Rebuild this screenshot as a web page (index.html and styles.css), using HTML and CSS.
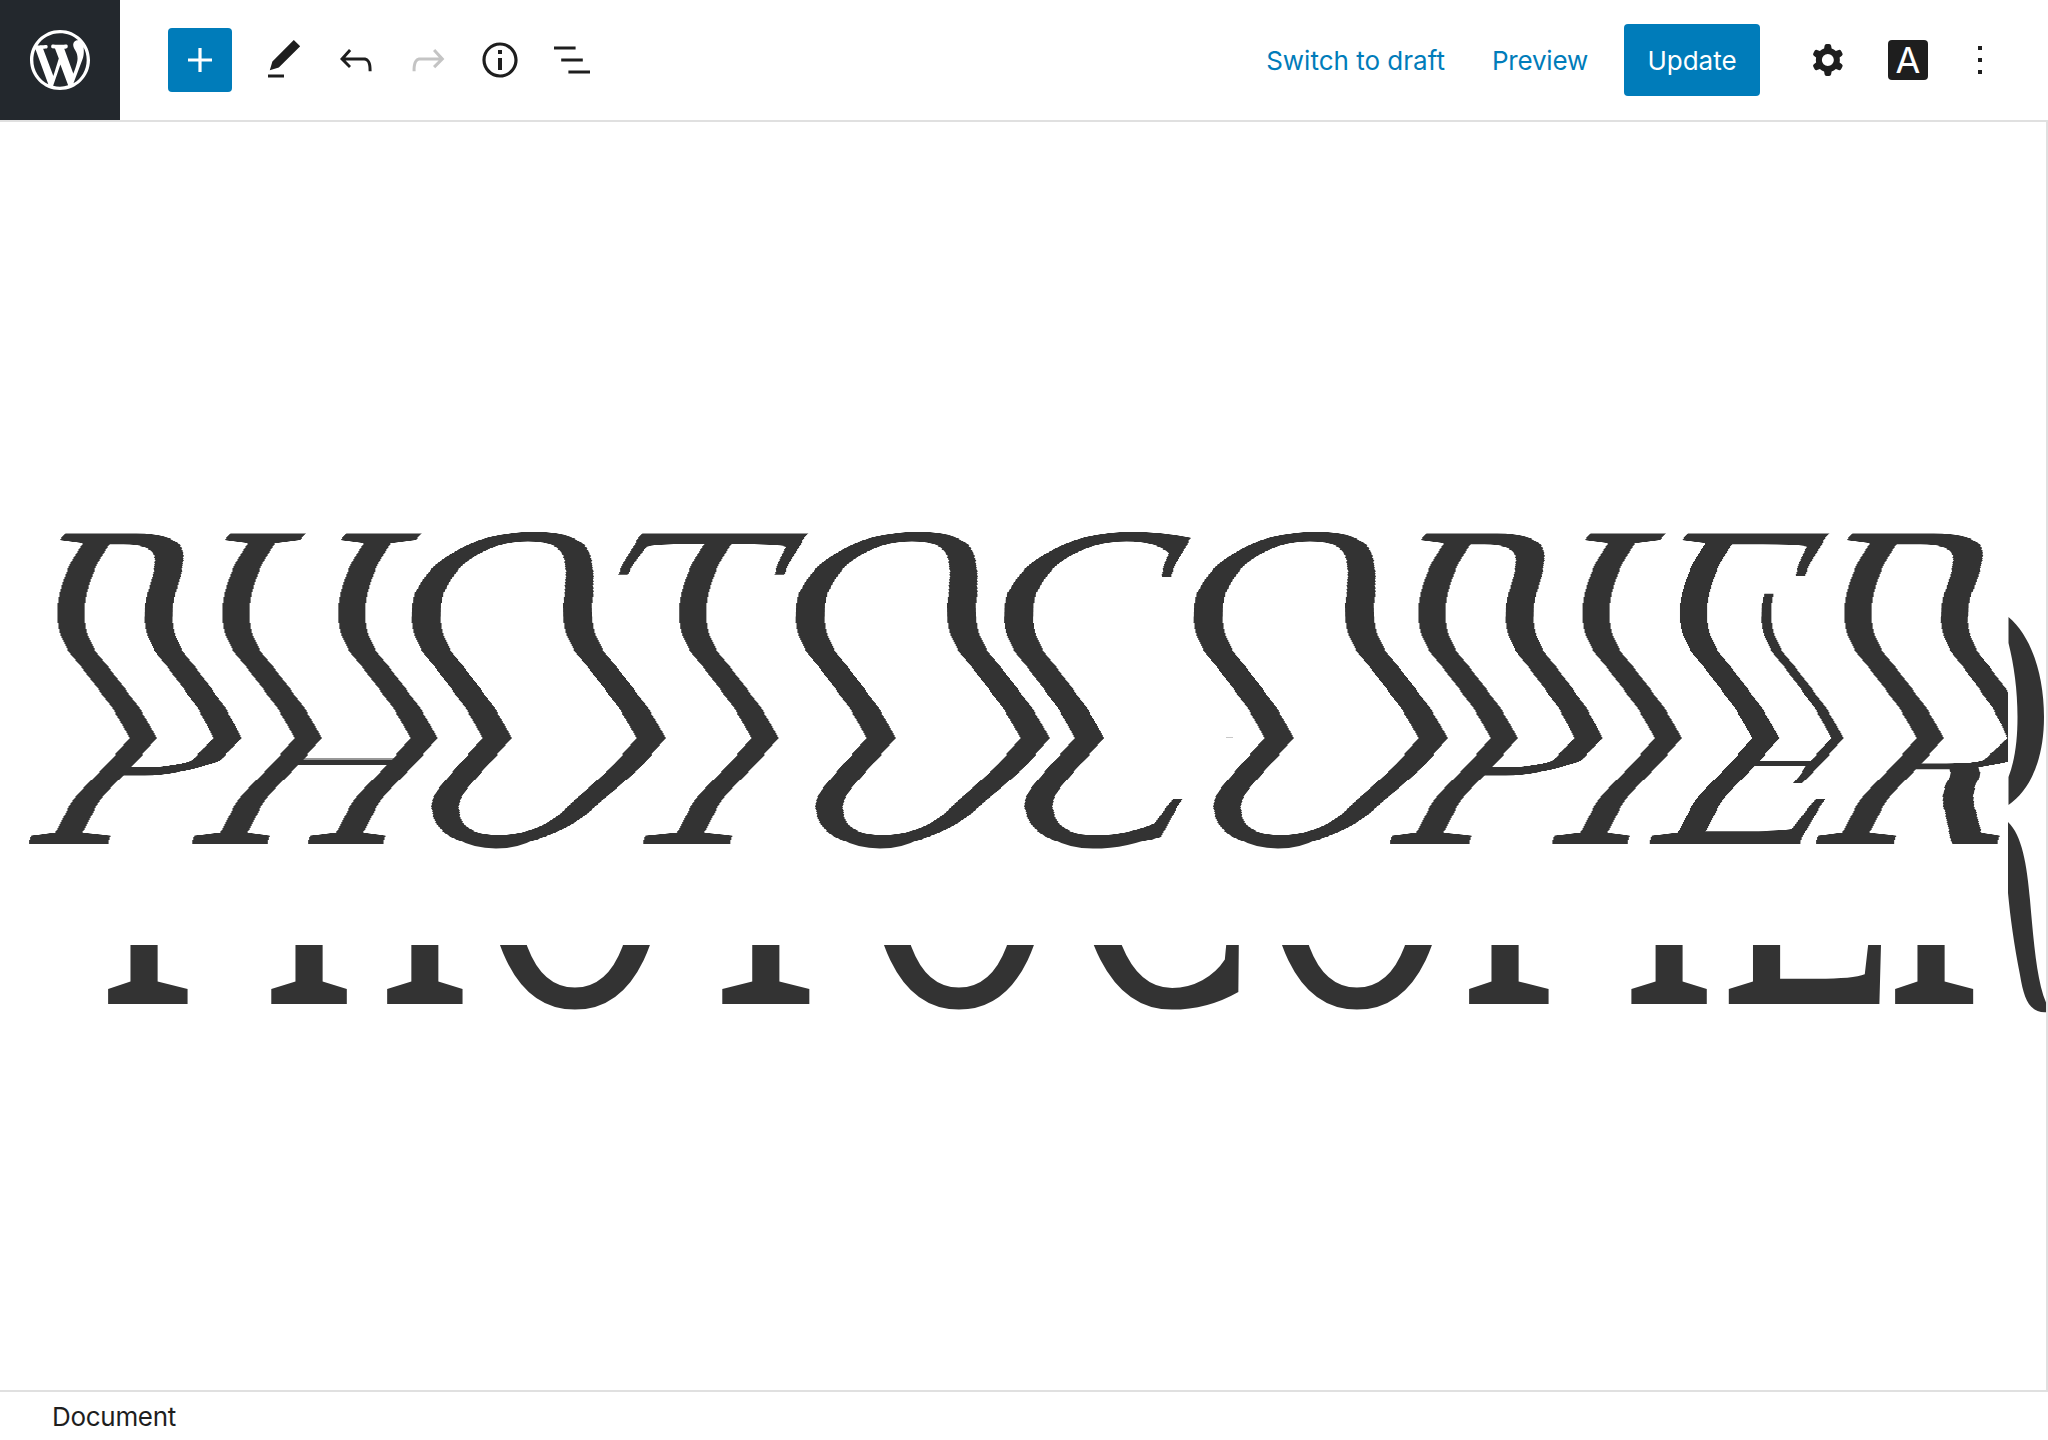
FILE: index.html
```html
<!DOCTYPE html>
<html lang="en">
<head>
<meta charset="utf-8">
<title>Photocopier</title>
<link rel="stylesheet" href="styles.css">
</head>
<body>
<div class="editor">
  <header class="topbar">
    <a class="logo">
      <svg class="logo-mark" viewBox="0 0 20 20"><path d="M20 10c0-5.51-4.49-10-10-10C4.48 0 0 4.49 0 10c0 5.52 4.48 10 10 10 5.51 0 10-4.48 10-10zM7.78 15.37L4.37 6.22c.55-.02 1.17-.08 1.17-.08.5-.06.44-1.13-.06-1.11 0 0-1.45.11-2.37.11-.18 0-.37 0-.58-.01C4.12 2.69 6.87 1.11 10 1.11c2.33 0 4.45.87 6.05 2.34-.68-.11-1.65.39-1.65 1.58 0 .74.45 1.36.9 2.1.35.61.55 1.36.55 2.46 0 1.49-1.4 5-1.4 5l-3.03-8.37c.54-.02.82-.17.82-.17.5-.05.44-1.25-.06-1.22 0 0-1.44.12-2.38.12-.87 0-2.33-.12-2.33-.12-.5-.03-.56 1.2-.06 1.22l.92.08 1.26 3.41zM17.41 10c.24-.64.74-1.87.43-4.25.7 1.29 1.05 2.71 1.05 4.25 0 3.29-1.73 6.24-4.4 7.78.97-2.59 1.94-5.2 2.92-7.78zM6.1 18.09C3.12 16.65 1.11 13.53 1.11 10c0-1.3.23-2.48.72-3.59C3.25 10.3 4.67 14.2 6.1 18.09zm4.03-6.63l2.58 6.98c-.86.29-1.76.45-2.71.45-.79 0-1.57-.11-2.29-.33.81-2.38 1.62-4.74 2.42-7.1z"/></svg>
    </a>
    <div class="tools">
      <button class="inserter"><svg class="icon-plus" viewBox="0 0 24 24"><path d="M18 11.2h-5.2V6h-1.6v5.2H6v1.6h5.2V18h1.6v-5.2H18z"/></svg></button>
      <div class="tool-icons">
        <svg class="icon" viewBox="0 0 24 24"><path d="M20.1 5.1L16.9 2 6.2 12.7l-1.3 4.4 4.5-1.3L20.1 5.1zM4 20.8h8v-1.5H4v1.5z"/></svg>
        <svg class="icon" viewBox="0 0 24 24"><path d="M18.3 11.7c-.6-.6-1.4-.9-2.3-.9H6.7l2.9-3.3-1.1-1-4.5 5L8.5 16l1-1-2.7-2.7H16c.5 0 .9.2 1.3.5 1 1 1 3.4 1 4.5v.3h1.5v-.2c0-1.5 0-4.3-1.5-5.7z"/></svg>
        <svg class="icon icon-off" viewBox="0 0 24 24"><path d="M15.6 6.5l-1.1 1 2.9 3.3H8c-.9 0-1.7.3-2.3.9-1.4 1.5-1.4 4.2-1.4 5.7v.2h1.5v-.3c0-1.1 0-3.5 1-4.5.3-.3.7-.5 1.3-.5h9.2L14.5 15l1.1 1.1 4.6-4.6-4.6-5z"/></svg>
        <svg class="icon" viewBox="0 0 24 24"><path d="M12 3.2c-4.8 0-8.8 3.9-8.8 8.8 0 4.8 3.9 8.8 8.8 8.8 4.8 0 8.8-3.9 8.8-8.8 0-4.8-4-8.8-8.8-8.8zm0 16c-4 0-7.2-3.3-7.2-7.2C4.8 8 8 4.8 12 4.8s7.2 3.3 7.2 7.2c0 4-3.2 7.2-7.2 7.2zM11 17h2v-6h-2v6zm0-8h2V7h-2v2z"/></svg>
        <svg class="icon" viewBox="0 0 24 24"><path d="M13.8 5.2H3v1.5h10.8V5.2zm-3.6 12v1.5H21v-1.5H10.2zm-3.6-6v1.5h10.8v-1.5H6.6z"/></svg>
      </div>
    </div>
    <div class="actions">
      <a class="link link-draft">Switch to draft</a>
      <a class="link link-preview">Preview</a>
      <button class="update">Update</button>
      <svg class="icon gear" viewBox="0 0 24 24"><path fill-rule="evenodd" clip-rule="evenodd" d="M10.289 4.836A1 1 0 0111.275 4h1.306a1 1 0 01.987.836l.244 1.466c.787.26 1.503.679 2.108 1.218l1.393-.522a1 1 0 011.216.437l.653 1.13a1 1 0 01-.23 1.273l-1.148.944a6.025 6.025 0 010 2.435l1.149.946a1 1 0 01.23 1.272l-.653 1.13a1 1 0 01-1.216.437l-1.394-.522c-.605.54-1.32.958-2.108 1.218l-.244 1.466a1 1 0 01-.987.836h-1.306a1 1 0 01-.986-.836l-.244-1.466a5.995 5.995 0 01-2.108-1.218l-1.394.522a1 1 0 01-1.217-.436l-.653-1.131a1 1 0 01.23-1.272l1.149-.946a6.026 6.026 0 010-2.435l-1.148-.944a1 1 0 01-.23-1.272l.653-1.131a1 1 0 011.217-.437l1.393.522a5.994 5.994 0 012.108-1.218l.244-1.466zM14.929 12a3 3 0 11-6 0 3 3 0 016 0z"/></svg>
      <span class="plugin-a">A</span>
      <svg class="icon more" viewBox="0 0 24 24"><path d="M13 19h-2v-2h2v2zm0-6h-2v-2h2v2zm0-6h-2V5h2v2z"/></svg>
    </div>
  </header>
  <main class="canvas">
    <svg class="stage" viewBox="0 122 2048 1268" width="2048" height="1268">
      <defs>
        <filter id="warp" filterUnits="userSpaceOnUse" primitiveUnits="userSpaceOnUse" x="0" y="500" width="2008" height="400" color-interpolation-filters="sRGB">
          <feImage id="warp-map" x="0" y="500" width="2048" height="400" preserveAspectRatio="none" result="map"/>
          <feDisplacementMap in="SourceGraphic" in2="map" scale="240" xChannelSelector="R" yChannelSelector="G"/>
        </filter>
        <clipPath id="stubs"><rect x="0" y="945" width="2008" height="80"/></clipPath>
      </defs>
      <g filter="url(#warp)">
        <text class="word" x="19 184 392 599 776 984 1174 1380 1542 1641.5 1806" transform="translate(0 844) scale(1 1.63)">PHOTOCOPIER</text>
      </g>
      <g clip-path="url(#stubs)">
        <text class="word" x="19 184 392 599 776 984 1174 1380 1542 1641.5 1806" transform="translate(79 1004) scale(1 2)">PHOTOCOPIER</text>
      </g>
      <path class="frag" d="M2008.5 617C2030 635 2044 672 2044 717C2044 760 2030 790 2008.5 805V777C2015 760 2017.5 740 2017.5 717C2017.5 690 2014 665 2008.5 643Z"/>
      <path class="frag" d="M2008 822C2022 835 2027 865 2030 900C2034 945 2037 985 2048 1007V1012C2030 1014 2024 1000 2020 975C2014 945 2010 915 2008 893Z"/>
      <rect class="speck" x="1226" y="737" width="7" height="1"/>
    </svg>
  </main>
  <footer class="status">Document</footer>
</div>
<script src="map.js"></script>
</body>
</html>
```
FILE: styles.css
```css
html, body {
  margin: 0;
  padding: 0;
  background: #fff;
}

.editor {
  display: flex;
  flex-direction: column;
  height: 1440px;
  width: 2048px;
  overflow: hidden;
  font-family: Inter, "Liberation Sans", sans-serif;
  font-size: 26px;
  color: #1e1e1e;
}

.topbar {
  display: flex;
  align-items: center;
  flex: none;
  height: 120px;
  border-bottom: 2px solid #e0e0e0;
}

.logo {
  display: flex;
  align-items: center;
  justify-content: center;
  flex: none;
  width: 120px;
  height: 120px;
  background: #23282d;
}

.logo-mark {
  width: 60px;
  height: 60px;
  fill: #fff;
}

.tools {
  display: flex;
  align-items: center;
  margin-left: 48px;
  gap: 28px;
}

.inserter {
  display: flex;
  align-items: center;
  justify-content: center;
  width: 64px;
  height: 64px;
  padding: 0;
  border: 0;
  border-radius: 4px;
  background: #007cba;
}

.icon-plus {
  width: 48px;
  height: 48px;
  fill: #fff;
}

.tool-icons {
  display: flex;
  gap: 24px;
}

.icon {
  display: block;
  flex: none;
  width: 48px;
  height: 48px;
  fill: #1e1e1e;
}

.icon-off {
  fill: #c4c4c4;
}

.actions {
  display: flex;
  align-items: center;
  margin-left: auto;
  height: 100%;
}

.link {
  color: #007cba;
  white-space: nowrap;
}

.link-draft {
  margin-right: 47px;
}

.link-preview {
  margin-right: 36px;
  letter-spacing: -0.2px;
}

.update {
  width: 136px;
  height: 72px;
  padding: 0;
  border: 0;
  border-radius: 4px;
  background: #007cba;
  color: #fff;
  font: inherit;
}

.gear {
  margin-left: 44px;
}

.plugin-a {
  display: flex;
  align-items: center;
  justify-content: center;
  width: 40px;
  height: 40px;
  margin-left: 36px;
  border-radius: 4px;
  background: #1e1e1e;
  color: #fff;
  font-size: 36px;
  font-weight: 400;
  line-height: 1;
}

.more {
  margin-left: 28px;
  margin-right: 44px;
}

.canvas {
  flex: 1;
  min-height: 0;
  overflow: hidden;
  box-sizing: border-box;
  border-right: 2px solid #e0e0e0;
}

.stage {
  display: block;
}

.word {
  font-family: "Liberation Serif", serif;
  font-size: 288px;
  font-kerning: none;
  fill: #333;
}

.frag {
  fill: #333;
}

.speck {
  fill: #c8c8c8;
}

.status {
  flex: none;
  height: 50px;
  box-sizing: border-box;
  border-top: 2px solid #e0e0e0;
  padding-left: 52px;
  line-height: 50px;
  letter-spacing: -0.3px;
  background: #fff;
}
```
FILE: map.js
```js
// Builds the displacement map that bends the headline: one row per pixel,
// red = horizontal shift, green = vertical shift.
(function () {
  var SCALE = 240, TOP = 500, BOTTOM = 900, BASELINE = 844, STRETCH = 1.63;

  var bendUpper = [[500,60],[530,40],[533,38],[543,31],[577,13],[613,6],[643,12.5],[677,37.5],[710,62],[738,78]];
  var bendLower = [[738,78],[767,53],[797,24],[827,7],[844,0],[900,0]];
  var heights = [[500,225],[528,195],[531.5,190.7],[578,141],[588,132],[595,124],[760,103.4],[765,91],[773,77],[791,59],[838,5.5],[844,0],[850,-4],[900,-55]];

  function smooth(pts, y) {
    for (var i = 0; i < pts.length - 1; i++) {
      if (y <= pts[i + 1][0]) {
        var a = pts[Math.max(i - 1, 0)], b = pts[i], c = pts[i + 1], d = pts[Math.min(i + 2, pts.length - 1)];
        var h = c[0] - b[0], t = (y - b[0]) / h;
        var m1 = (c[1] - a[1]) / (c[0] - a[0]) * h, m2 = (d[1] - b[1]) / (d[0] - b[0]) * h;
        var t2 = t * t, t3 = t2 * t;
        return (2*t3-3*t2+1)*b[1] + (t3-2*t2+t)*m1 + (-2*t3+3*t2)*c[1] + (t3-t2)*m2;
      }
    }
    return pts[pts.length - 1][1];
  }

  // Monotone interpolation, so the height never overshoots where the stretch changes abruptly.
  function tangent(s0, s1) {
    return s0 * s1 <= 0 ? 0 : 2 * s0 * s1 / (s0 + s1);
  }

  function monotone(pts, y) {
    var n = pts.length;
    for (var i = 0; i < n - 1; i++) {
      if (y <= pts[i + 1][0]) {
        var h = pts[i + 1][0] - pts[i][0];
        var s = (pts[i + 1][1] - pts[i][1]) / h;
        var sPrev = i > 0 ? (pts[i][1] - pts[i - 1][1]) / (pts[i][0] - pts[i - 1][0]) : s;
        var sNext = i < n - 2 ? (pts[i + 2][1] - pts[i + 1][1]) / (pts[i + 2][0] - pts[i + 1][0]) : s;
        var m1 = tangent(sPrev, s) * h, m2 = tangent(s, sNext) * h;
        var t = (y - pts[i][0]) / h, t2 = t * t, t3 = t2 * t;
        return (2*t3-3*t2+1)*pts[i][1] + (t3-2*t2+t)*m1 + (-2*t3+3*t2)*pts[i + 1][1] + (t3-t2)*m2;
      }
    }
    return pts[n - 1][1];
  }

  function level(v) {
    return Math.max(0, Math.min(255, Math.round(v * 255)));
  }

  var rects = '';
  for (var y = TOP; y < BOTTOM; y++) {
    var yc = y + 0.5;
    var bend = yc <= 738 ? smooth(bendUpper, yc) : smooth(bendLower, yc);
    var srcY = BASELINE - STRETCH * monotone(heights, yc);
    var r = level(0.5 - bend / SCALE);
    var g = level(0.5 + (srcY - yc) / SCALE);
    rects += '<rect x="0" y="' + (y - TOP) + '" width="2048" height="1" fill="rgb(' + r + ',' + g + ',128)"/>';
  }
  var svg = '<svg xmlns="http://www.w3.org/2000/svg" width="2048" height="' + (BOTTOM - TOP) + '" shape-rendering="crispEdges">' + rects + '</svg>';
  document.getElementById('warp-map').setAttribute('href', 'data:image/svg+xml,' + encodeURIComponent(svg));
})();
```
